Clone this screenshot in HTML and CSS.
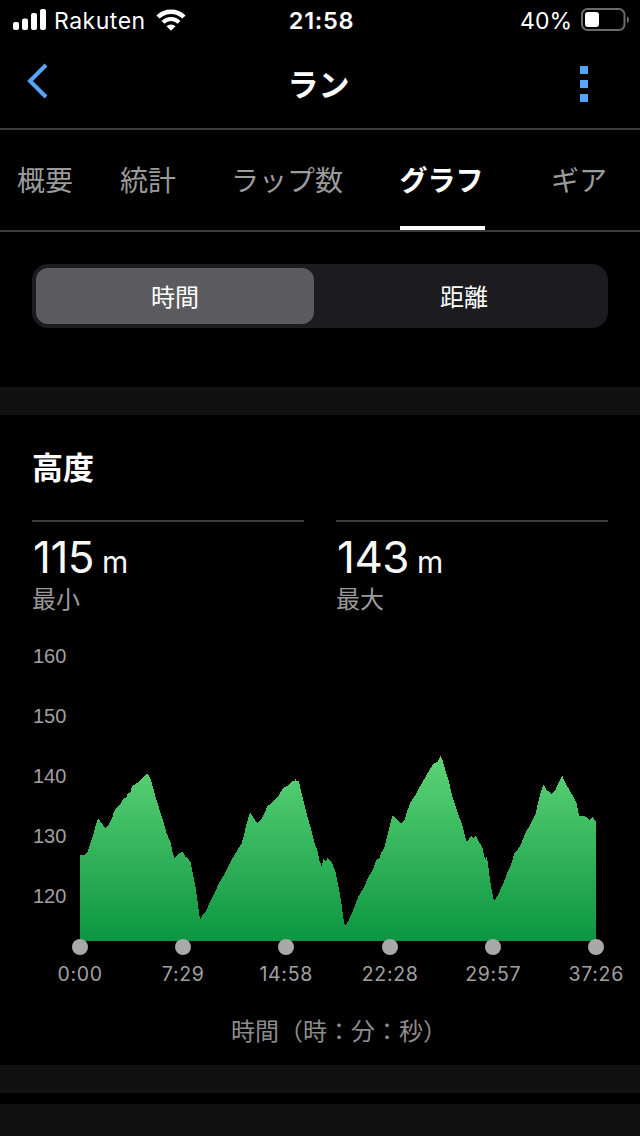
FILE: index.html
```html
<!DOCTYPE html>
<html lang="ja">
<head>
    <meta charset="UTF-8">
    <meta name="viewport" content="width=device-width, initial-scale=1.0">
    <title>ラン</title>
    <link rel="stylesheet" href="styles.css">
</head>
<body>
    <div class="status-bar">
        <div class="carrier">
            <svg class="signal" width="34" height="22" viewBox="0 0 34 22" fill="#fff">
                <rect x="0" y="13" width="6" height="8" rx="2"/>
                <rect x="9" y="9.500" width="6" height="11.500" rx="2"/>
                <rect x="18" y="4" width="6" height="17" rx="2"/>
                <rect x="27" y="0" width="6" height="21" rx="2"/>
            </svg>
            <span class="carrier-name">Rakuten</span>
            <svg width="30" height="22" viewBox="0 0 30 22" fill="none" stroke="#fff" stroke-width="4.500">
                <path d="M2 8 A18.500 18.500 0 0 1 28 8"/>
                <path d="M7 13.300 A11.300 11.300 0 0 1 23 13.300" stroke-width="4"/>
                <path d="M10.500 17.300 A6.500 6.500 0 0 1 19.500 17.300 L15 21.800 Z" fill="#fff" stroke="none"/>
            </svg>
        </div>
        <div class="clock">21:58</div>
        <div class="battery">
            <span>40%</span>
            <svg width="49" height="24" viewBox="0 0 49 24">
                <rect x="1" y="1" width="42.500" height="21" rx="5.500" fill="none" stroke="#6b6b6b" stroke-width="2"/>
                <rect x="4" y="4" width="14" height="15" rx="3" fill="#fff"/>
                <path d="M46 8 Q48 9 48 11.500 Q48 14 46 15 Z" fill="#6b6b6b"/>
            </svg>
        </div>
    </div>

    <header class="nav-bar">
        <svg class="back" width="22" height="36" viewBox="0 0 22 36" fill="none" stroke="#55a5f8" stroke-width="4">
            <path d="M20 2 L4 18 L20 34"/>
        </svg>
        <h1>ラン</h1>
        <div class="more"><i></i><i></i><i></i></div>
    </header>

    <nav class="tabs">
        <span class="tab">概要</span>
        <span class="tab">統計</span>
        <span class="tab">ラップ数</span>
        <span class="tab active"><b>グラフ</b></span>
        <span class="tab">ギア</span>
    </nav>

    <div class="switch-area">
        <div class="switch">
            <span class="option selected">時間</span>
            <span class="option">距離</span>
        </div>
    </div>

    <section class="card">
        <h2>高度</h2>
        <div class="stats">
            <div class="stat">
                <div class="value">115 <small>m</small></div>
                <div class="label">最小</div>
            </div>
            <div class="stat">
                <div class="value">143 <small>m</small></div>
                <div class="label">最大</div>
            </div>
        </div>

        <svg class="chart" width="640" height="370" viewBox="0 0 640 370">
            <defs>
                <linearGradient id="green" gradientUnits="userSpaceOnUse" x1="0" y1="126" x2="0" y2="311">
                    <stop offset="0" stop-color="#5dd477"/>
                    <stop offset="1" stop-color="#0c9641"/>
                </linearGradient>
            </defs>
            <g class="y-axis">
                <text x="33" y="33">160</text>
                <text x="33" y="93">150</text>
                <text x="33" y="153">140</text>
                <text x="33" y="213">130</text>
                <text x="33" y="273">120</text>
            </g>
            <path class="area" fill="url(#green)" d="M80 311 L80 225 85 225 87.700 221.700 90 215 92.700 206.700 95 198 97 191 98.700 188.700 100.300 192 102.700 194 105 198.300 107.300 196.700 110 192 112.300 187.300 114.300 181 116.700 177.700 119.300 175.700 122 171 125 167.700 127 167 127.700 163.300 130.700 162 132 156 135 154.700 138.300 152 141.700 149.300 144.300 146 147 144 149.300 146 151.700 152.700 155 165 159.300 179 163.300 191.700 166.700 203.300 170.700 212.700 172.300 221 174.300 228.300 176.700 225.700 180 222.700 182.700 222 185.300 226.700 188.300 228.700 190.700 232.700 192.700 243.300 195.700 258.300 198 275 200 289.500
                202.700 285 206 281.700 210 271.700 215 261.700 219 253.300 225 243.300 230 232.700 235 224 241.700 213.300 244 205 246.700 193.300 250 182.300 253.300 187.300 257.300 193.300 261.700 189.300 265 181.700 267.700 175.700 272.300 172.700 278.300 166.700 282.700 158.300 287.700 155.700 291.700 151.300 294.700 150.700 295.700 148 296.300 150.700 298.700 150.700 301 161 304 173.300 307.300 186 311.700 201.700 315 215 317.300 220 319.300 230 321.700 236 323.300 229.300 326 231.300 327.300 228.300 331.700 232.300 335.700 242.300 338.300 255.700 341.300 272.300 343.300 288.300 345 296
                348.300 291 353.300 280 358.300 266.700 363.300 258.300 368.300 247.700 373.300 238.300 376.700 229.300 379.300 228.300 381.700 221.700 384.300 218.300 388.300 201.700 392.700 185 396.700 188.700 401 193.300 404.300 190.700 406.700 182.700 410.700 171.700 416 164.300 419.300 157.700 425 147.700 430 139.300 433.300 134 437.700 131.700 440.300 126 442.700 130.700 445.300 140 449 151.700 452.300 166.700 457.300 181.700 462.300 195 464.300 203.300 466.700 212 469.300 208.700 472 206 473.700 208 475.700 206 479 212 482.300 216.700 484.700 228.300 486 229.300 486.700 226 488.300 236.700 491 256.700 494 271
                498.300 264.300 504 251.700 508.700 239.300 510.700 236 514.300 223.300 520 216.700 524.300 205.700 530.700 193.300 535.700 184 538.300 171.700 541.300 160 543.700 155 546.700 160 551.700 163.700 555 160.700 558.300 153.300 562.300 145.700 565.300 152.700 570.700 162.300 574.300 168.300 576.700 173.300 579 185.700 583.300 185.700 586 187 589.300 190 592.300 187 596 191.300 L596 311 Z"/>
            <g fill="#a9a9a9">
                <circle cx="80" cy="317" r="8"/>
                <circle cx="183" cy="317" r="8"/>
                <circle cx="286" cy="317" r="8"/>
                <circle cx="390" cy="317" r="8"/>
                <circle cx="493" cy="317" r="8"/>
                <circle cx="596" cy="317" r="8"/>
            </g>
            <g class="x-axis">
                <text x="80.200" y="351">0:00</text>
                <text x="183.200" y="351">7:29</text>
                <text x="286.200" y="351">14:58</text>
                <text x="390.200" y="351">22:28</text>
                <text x="493.200" y="351">29:57</text>
                <text x="596.200" y="351">37:26</text>
            </g>
        </svg>
        <div class="axis-title">時間（時：分：秒）</div>
    </section>

    <div class="next-card"></div>
</body>
</html>
```

FILE: styles.css
```css
* {
    box-sizing: border-box;
}

body {
    margin: 0;
    width: 640px;
    height: 1136px;
    overflow: hidden;
    background-color: #000;
    color: #fff;
    font-family: Inter, "Noto Sans CJK JP", sans-serif;
}

svg {
    display: block;
    flex-shrink: 0;
}

.status-bar {
    display: grid;
    grid-template-columns: 1fr auto 1fr;
    align-items: center;
    height: 40px;
    padding: 0 10px 0 13px;
    font-size: 23px;
    line-height: 38px;
}

.status-bar span,
.clock {
    padding-top: 2px;
}

.carrier {
    display: flex;
    align-items: center;
}

.carrier-name {
    margin: 0 10px 0 7px;
    letter-spacing: 0.5px;
}

.clock {
    font-weight: 600;
    font-size: 23.5px;
    letter-spacing: 0.7px;
}

.battery {
    display: flex;
    align-items: center;
    justify-content: flex-end;
    gap: 9px;
}

.nav-bar {
    display: flex;
    align-items: center;
    justify-content: space-between;
    height: 90px;
    padding: 0 52px 6px 26px;
    border-bottom: 2px solid #3c3c3c;
}

.nav-bar h1 {
    margin: 0;
    padding: 8px 0 0 9px;
    font-size: 31px;
    font-weight: 700;
    line-height: 40px;
}

.more {
    display: flex;
    flex-direction: column;
    gap: 6px;
    padding-top: 5px;
}

.more i {
    width: 8px;
    height: 8px;
    background-color: #55a5f8;
}

.tabs {
    display: grid;
    grid-template-columns: 90px 116px 162px 148px 126px;
    height: 102px;
    border-bottom: 2px solid #3c3c3c;
    color: #9b9b9b;
    font-size: 28px;
    line-height: 103px;
}

.tab {
    display: flex;
    justify-content: center;
    height: 100px;
}

.active {
    color: #fff;
}

.active b {
    width: 85px;
    border-bottom: 4px solid #fff;
}

.switch-area {
    height: 183px;
    padding: 32px;
    border-bottom: 28px solid #111;
}

.switch {
    display: grid;
    grid-template-columns: 278px 1fr;
    gap: 8px;
    height: 64px;
    padding: 4px;
    border-radius: 16px;
    background-color: #1c1b20;
    font-size: 24px;
    line-height: 59px;
    text-align: center;
}

.option {
    height: 56px;
    border-radius: 12px;
}

.option:last-child {
    padding-left: 2px;
}

.selected {
    background-color: #5b5a5f;
}

.card {
    height: 678px;
    border-bottom: 28px solid #111;
}

.card h2 {
    margin: 0;
    padding: 31px 32px 0;
    height: 105px;
    font-size: 31px;
    font-weight: 700;
    line-height: 44px;
}

.stats {
    display: flex;
    gap: 32px;
    height: 110px;
    padding: 0 32px;
}

.stat {
    flex: 1;
    border-top: 2px solid #3c3c3c;
}

.value {
    height: 63px;
    padding-left: 1px;
    color: #f8f8f8;
    font-size: 44px;
    font-kerning: none;
    line-height: 70px;
    letter-spacing: -0.5px;
    word-spacing: -4px;
}

.value small {
    font-size: 30px;
}

.label {
    color: #9b9b9b;
    font-size: 24px;
    line-height: 30px;
}

.area {
    shape-rendering: crispEdges;
}

.y-axis {
    fill: #a0a0a0;
    font-family: "Liberation Sans", sans-serif;
    font-size: 20px;
}

.x-axis {
    fill: #a0a0a0;
    font-size: 19.5px;
    letter-spacing: 0.7px;
    text-anchor: middle;
}

.axis-title {
    padding: 1px 0 0 231px;
    color: #8c8c8c;
    font-size: 24px;
    line-height: 61px;
}

.next-card {
    height: 32px;
    margin-top: 11px;
    background-color: #111;
}
```
